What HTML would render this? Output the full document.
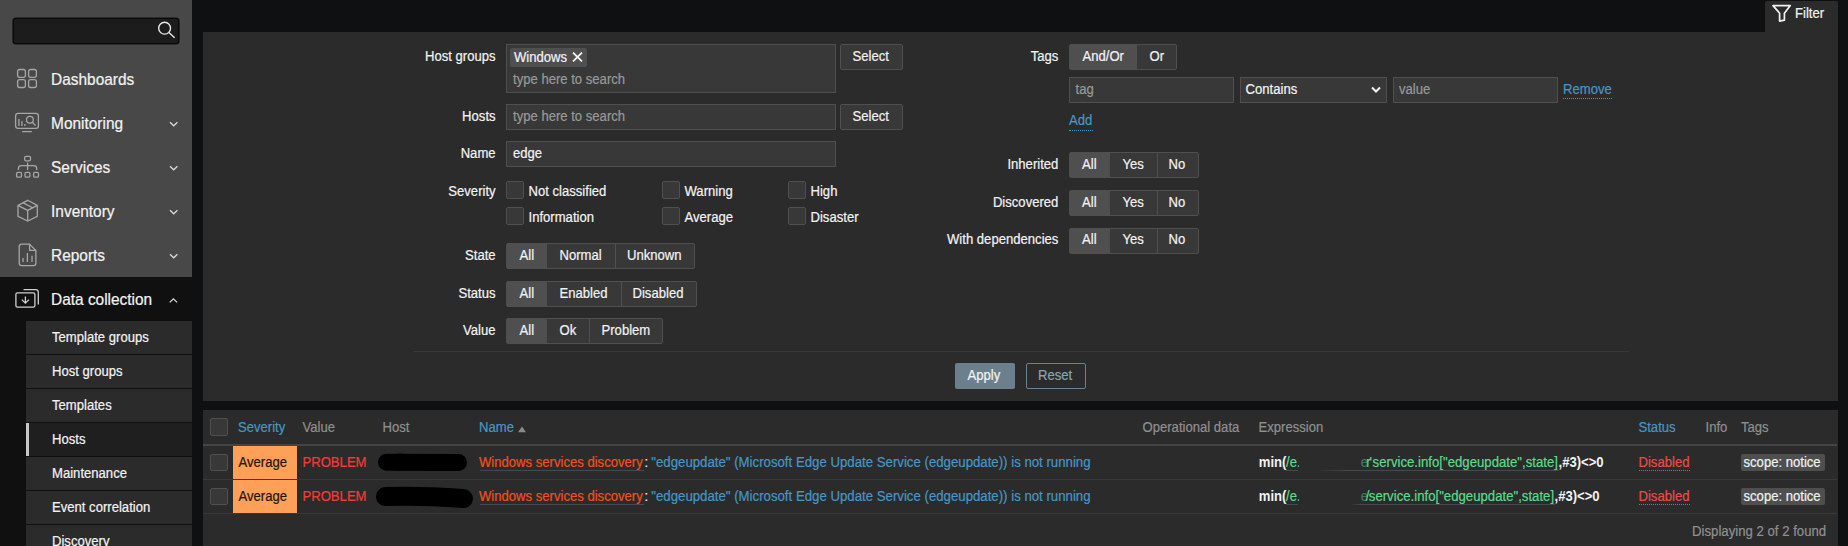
<!DOCTYPE html>
<html><head><meta charset="utf-8">
<style>
*{box-sizing:border-box;margin:0;padding:0}
html,body{width:1848px;height:546px;overflow:hidden;background:#0e1012;font-family:"Liberation Sans",sans-serif;color:#f2f2f2;font-size:13.1px;-webkit-text-stroke:0.2px currentColor}
.a{position:absolute}
.t{position:absolute;white-space:nowrap;line-height:16px;transform:scaleY(1.09);transform-origin:0 12px}
#sb{left:0;top:0;width:192px;height:277px;background:#484848}
#search{left:13px;top:18px;width:166px;height:26px;background:#1c1c1c;border:1px solid #0a0a0a;box-shadow:0 0 0 .6px #111;border-radius:3px}
.mi{font-size:15.42px;color:#f2f2f2;line-height:18px;transform:scaleY(1.05);transform-origin:0 14px}
.chev{position:absolute;left:170px;width:8px;height:5px}
#dc{left:0;top:277px;width:192px;height:269px;background:#101010}
.sub{position:absolute;left:26px;width:166px;height:33px;background:#2b2b2b}
.sub.sel{background:#1f1f1f}
.subt{position:absolute;left:52px;white-space:nowrap;line-height:16px;font-size:13.1px;transform:scaleY(1.09);transform-origin:0 12px}
#panel{left:203px;top:32px;width:1635px;height:369px;background:#2b2b2b}
#tab{left:1765px;top:1px;width:73px;height:31px;background:#2b2b2b;border-radius:2px 2px 0 0}
#tbl{left:203px;top:410px;width:1635px;height:136px;background:#2b2b2b}
.lbl{position:absolute;white-space:nowrap;line-height:16px;text-align:right;transform:scaleY(1.09);transform-origin:0 12px}
.inp{position:absolute;background:#383838;border:1px solid #4f4f4f}
.btn{position:absolute;background:#383838;border:1px solid #4f4f4f;border-radius:2px}
.ph{color:#999}
.cb{position:absolute;width:18px;height:18px;background:#383838;border:1px solid #4f4f4f;border-radius:2px}
.rg{position:absolute;border:1px solid #4f4f4f;border-radius:2px;background:#383838;height:26px}
.rs{position:absolute;top:0;height:24px;background:#4f4f4f}
.rsep{position:absolute;top:0;width:1px;height:24px;background:#4f4f4f}
.link{color:#4796c4}
.th{color:#8f8f8f}
.red{color:#f43a36}
.orange{color:#f24f1d}
.green{color:#59db8f}
.b{font-weight:bold;-webkit-text-stroke:0}
</style></head><body>
<!-- sidebar -->
<div id="sb" class="a"></div>
<div id="search" class="a"></div>
<div id="dc" class="a"></div>
<svg class="a" style="left:0;top:0" width="192" height="546" viewBox="0 0 192 546" fill="none">
 <g stroke="#e6e6e6" stroke-width="1.4"><circle cx="164.6" cy="28.2" r="5.9"/><path d="M168.9 32.6 L174.6 37.8"/></g>
 <g stroke="#a6a6a6" stroke-width="1.3">
  <rect x="17.6" y="69.5" width="7.8" height="7.8" rx="2"/><rect x="28.6" y="69.5" width="7.8" height="7.8" rx="2"/>
  <rect x="17.6" y="79.7" width="7.8" height="7.8" rx="2"/><rect x="28.6" y="79.7" width="7.8" height="7.8" rx="2"/>
  <rect x="15.6" y="113.4" width="22.8" height="14.9" rx="2.6"/><path d="M22.2 131.6 H31.8"/>
  <path d="M18.9 119 V126 M21.9 121.2 V126 M24.9 123.9 V126"/><circle cx="29.9" cy="119.8" r="3.4"/><path d="M32.3 122.3 L35.5 125.5"/>
  <rect x="24.7" y="156.3" width="5.8" height="4.6" rx="1.3"/><path d="M27.6 162.6 V169.9 M18.4 169.9 V168.5 Q18.4 165.7 21.4 165.7 H33.7 Q36.7 165.7 36.7 168.5 V169.9"/>
  <rect x="16.6" y="172.4" width="4.9" height="4.8" rx="1.3"/><rect x="25" y="172.4" width="4.9" height="4.8" rx="1.3"/><rect x="33.6" y="172.4" width="4.9" height="4.8" rx="1.3"/>
  <path d="M27.7 200.3 L37.3 205.4 V216.4 L27.7 221 L18 216.4 V205.4 Z M18 205.4 L27.7 210.4 L37.3 205.4 M27.7 210.4 V221 M22.8 202.6 L32.6 207.8"/>
  <path d="M29.6 244.2 H21.8 Q19.2 244.2 19.2 246.8 V263 Q19.2 265.6 21.8 265.6 H33.3 Q35.9 265.6 35.9 263 V250.4 L29.6 244.2 V250.4 H35.9"/>
  <path d="M23 258 V262 M27.4 253 V262 M32 255.8 V262"/>
 </g>
 <g stroke="#d0d0d0" stroke-width="1.3">
  <rect x="15.9" y="292.8" width="19" height="14.4" rx="1.6"/><path d="M23.5 289.6 H35.6 Q38.3 289.6 38.3 292.3 V304.6"/>
  <path d="M25.4 296.4 V303 M21.8 299.6 L25.4 303.2 L29 299.6"/>
 </g>
 <g stroke="#d8d8d8" stroke-width="1.3"><path d="M170 122.2 L173.7 125.8 L177.4 122.2 M170 166.2 L173.7 169.8 L177.4 166.2 M170 210.2 L173.7 213.8 L177.4 210.2 M170 254.2 L173.7 257.8 L177.4 254.2"/>
 <path d="M169.7 302.4 L173.4 298.8 L177.1 302.4"/></g>
</svg>
<div class="t mi" style="left:51.1px;top:70.5px">Dashboards</div>
<div class="t mi" style="left:51.1px;top:114.5px">Monitoring</div>
<div class="t mi" style="left:51.1px;top:158.5px">Services</div>
<div class="t mi" style="left:51.1px;top:202.5px">Inventory</div>
<div class="t mi" style="left:51.1px;top:246.5px">Reports</div>
<div class="t mi" style="left:51.1px;top:290.5px">Data collection</div>
<div class="sub" style="top:321px"></div><div class="subt" style="top:330px">Template groups</div>
<div class="sub" style="top:355px"></div><div class="subt" style="top:364px">Host groups</div>
<div class="sub" style="top:389px"></div><div class="subt" style="top:398px">Templates</div>
<div class="sub sel" style="top:423px"></div><div class="a" style="left:26px;top:423px;width:3px;height:33px;background:#c8c8c8"></div><div class="subt" style="top:432px">Hosts</div>
<div class="sub" style="top:457px"></div><div class="subt" style="top:466px">Maintenance</div>
<div class="sub" style="top:491px"></div><div class="subt" style="top:500px">Event correlation</div>
<div class="sub" style="top:525px"></div><div class="subt" style="top:534px">Discovery</div>

<!-- panel -->
<div id="tab" class="a"></div>
<div id="panel" class="a"></div>
<div id="tbl" class="a"></div>
<!-- filter tab -->
<svg class="a" style="left:1765px;top:0" width="40" height="32" viewBox="1765 0 40 32" fill="none"><path d="M1773 5.6 H1790.3 L1784.4 13.2 V20.2 L1779.6 21.2 V13.2 Z" stroke="#f2f2f2" stroke-width="1.7" stroke-linejoin="round"/></svg>
<div class="t" style="left:1795px;top:6px">Filter</div>
<!-- left labels -->
<div class="lbl" style="left:300px;width:195.6px;top:49px">Host groups</div>
<div class="lbl" style="left:300px;width:195.6px;top:109px">Hosts</div>
<div class="lbl" style="left:300px;width:195.6px;top:146px">Name</div>
<div class="lbl" style="left:300px;width:195.6px;top:184px">Severity</div>
<div class="lbl" style="left:300px;width:195.6px;top:248px">State</div>
<div class="lbl" style="left:300px;width:195.6px;top:286px">Status</div>
<div class="lbl" style="left:300px;width:195.6px;top:323px">Value</div>
<!-- host groups multiselect -->
<div class="inp" style="left:506px;top:44px;width:330px;height:49px"></div>
<div class="a" style="left:510px;top:48px;width:77px;height:19px;background:#4f4f4f;border-radius:2px"></div>
<div class="t" style="left:514px;top:50px">Windows</div>
<svg class="a" style="left:572px;top:52px" width="11" height="10" viewBox="0 0 11 10"><path d="M1 0.6 L10 9.4 M10 0.6 L1 9.4" stroke="#f2f2f2" stroke-width="1.8"/></svg>
<div class="t ph" style="left:513px;top:72px">type here to search</div>
<div class="btn" style="left:840px;top:44px;width:63px;height:26px"></div>
<div class="t" style="left:852.5px;top:49px">Select</div>
<div class="inp" style="left:506px;top:104px;width:330px;height:26px"></div>
<div class="t ph" style="left:513px;top:109px">type here to search</div>
<div class="btn" style="left:840px;top:104px;width:63px;height:26px"></div>
<div class="t" style="left:852.5px;top:109px">Select</div>
<div class="inp" style="left:506px;top:141px;width:330px;height:26px"></div>
<div class="t" style="left:513px;top:146px">edge</div>
<!-- severity -->
<div class="cb" style="left:506px;top:181px"></div><div class="t" style="left:528.5px;top:184px">Not classified</div>
<div class="cb" style="left:506px;top:207px"></div><div class="t" style="left:528.5px;top:210px">Information</div>
<div class="cb" style="left:662px;top:181px"></div><div class="t" style="left:684.5px;top:184px">Warning</div>
<div class="cb" style="left:662px;top:207px"></div><div class="t" style="left:684.5px;top:210px">Average</div>
<div class="cb" style="left:788px;top:181px"></div><div class="t" style="left:810.5px;top:184px">High</div>
<div class="cb" style="left:788px;top:207px"></div><div class="t" style="left:810.5px;top:210px">Disaster</div>
<!-- radios left -->
<div class="rg" style="left:506px;top:243px;width:189px"><div class="rs" style="left:0;width:40px"></div><div class="rsep" style="left:107.5px"></div></div>
<div class="t" style="left:519.5px;top:248px">All</div><div class="t" style="left:559.5px;top:248px">Normal</div><div class="t" style="left:627px;top:248px">Unknown</div>
<div class="rg" style="left:506px;top:281px;width:191px"><div class="rs" style="left:0;width:40px"></div><div class="rsep" style="left:114px"></div></div>
<div class="t" style="left:519.5px;top:286px">All</div><div class="t" style="left:559.5px;top:286px">Enabled</div><div class="t" style="left:632.5px;top:286px">Disabled</div>
<div class="rg" style="left:506px;top:318px;width:157px"><div class="rs" style="left:0;width:40px"></div><div class="rsep" style="left:82px"></div></div>
<div class="t" style="left:519.5px;top:323px">All</div><div class="t" style="left:559.5px;top:323px">Ok</div><div class="t" style="left:601.5px;top:323px">Problem</div>
<!-- right labels -->
<div class="lbl" style="left:850px;width:208.4px;top:49px">Tags</div>
<div class="lbl" style="left:850px;width:208.4px;top:157px">Inherited</div>
<div class="lbl" style="left:850px;width:208.4px;top:195px">Discovered</div>
<div class="lbl" style="left:850px;width:208.4px;top:232px">With dependencies</div>
<div class="rg" style="left:1069px;top:44px;width:108px"><div class="rs" style="left:0;width:67px"></div></div>
<div class="t" style="left:1082.5px;top:49px">And/Or</div><div class="t" style="left:1149.5px;top:49px">Or</div>
<div class="inp" style="left:1069px;top:77px;width:165px;height:26px"></div>
<div class="t ph" style="left:1075.5px;top:82px">tag</div>
<div class="inp" style="left:1240px;top:77px;width:147px;height:26px"></div>
<div class="t" style="left:1245.6px;top:82px">Contains</div>
<svg class="a" style="left:1370px;top:85px" width="12" height="10" viewBox="0 0 12 10"><path d="M2 2.5 L6 6.5 L10 2.5" stroke="#f2f2f2" stroke-width="2" fill="none"/></svg>
<div class="inp" style="left:1393px;top:77px;width:165px;height:26px"></div>
<div class="t ph" style="left:1399px;top:82px">value</div>
<div class="t link" style="left:1563px;top:82px">Remove</div>
<div class="a" style="left:1563px;top:97.5px;width:49px;border-top:1px dotted #4796c4"></div>
<div class="t link" style="left:1069px;top:113px">Add</div>
<div class="a" style="left:1069px;top:130px;width:24px;border-top:1px dotted #4796c4"></div>
<div class="rg" style="left:1069px;top:152px;width:130px"><div class="rs" style="left:0;width:40px"></div><div class="rsep" style="left:87px"></div></div>
<div class="t" style="left:1082px;top:157px">All</div><div class="t" style="left:1122.5px;top:157px">Yes</div><div class="t" style="left:1168.5px;top:157px">No</div>
<div class="rg" style="left:1069px;top:190px;width:130px"><div class="rs" style="left:0;width:40px"></div><div class="rsep" style="left:87px"></div></div>
<div class="t" style="left:1082px;top:195px">All</div><div class="t" style="left:1122.5px;top:195px">Yes</div><div class="t" style="left:1168.5px;top:195px">No</div>
<div class="rg" style="left:1069px;top:228px;width:130px"><div class="rs" style="left:0;width:40px"></div><div class="rsep" style="left:87px"></div></div>
<div class="t" style="left:1082px;top:232px">All</div><div class="t" style="left:1122.5px;top:232px">Yes</div><div class="t" style="left:1168.5px;top:232px">No</div>
<!-- separator & buttons -->
<div class="a" style="left:413px;top:351px;width:1216px;height:1px;background:#383838"></div>
<div class="a" style="left:955px;top:363px;width:60px;height:26px;background:#6b808c;border-radius:2px"></div>
<div class="t" style="left:967.5px;top:368px">Apply</div>
<div class="a" style="left:1026px;top:363px;width:60px;height:26px;border:1px solid #6b808c;border-radius:2px"></div>
<div class="t" style="left:1038px;top:368px;color:#8da3b0">Reset</div>
<!-- table -->
<div class="cb" style="left:210px;top:418px"></div>
<div class="t link" style="left:238px;top:420px">Severity</div>
<div class="t th" style="left:302.5px;top:420px">Value</div>
<div class="t th" style="left:382.5px;top:420px">Host</div>
<div class="t link" style="left:479px;top:420px">Name</div>
<svg class="a" style="left:517px;top:426px" width="10" height="7" viewBox="0 0 10 7"><path d="M1 6.2 L5 0.6 L9 6.2 Z" fill="#8a8a8a"/></svg>
<div class="t th" style="left:1142.5px;top:420px">Operational data</div>
<div class="t th" style="left:1258.5px;top:420px">Expression</div>
<div class="t link" style="left:1638.5px;top:420px">Status</div>
<div class="t th" style="left:1705.5px;top:420px">Info</div>
<div class="t th" style="left:1741px;top:420px">Tags</div>
<div class="a" style="left:203px;top:444px;width:1634px;height:2px;background:#444"></div>
<div class="a" style="left:203px;top:479px;width:1634px;height:1px;background:#383838"></div>
<div class="a" style="left:203px;top:513px;width:1634px;height:1px;background:#383838"></div>
<!-- row 1 -->
<div class="cb" style="left:210px;top:453.5px;height:17.5px"></div>
<div class="a" style="left:233px;top:446px;width:64px;height:33px;background:#ffa059"></div>
<div class="t" style="left:238.5px;top:455px;color:#1f1408">Average</div>
<div class="t red" style="left:302.5px;top:455px">PROBLEM</div>
<div class="t orange" style="left:479px;top:455px">Windows services discovery</div>
<div class="a" style="left:479.5px;top:470px;width:164.5px;height:1px;background:#434b51"></div>
<div class="t" style="left:644.5px;top:455px">:</div>
<div class="t link" style="left:651.3px;top:455px;font-size:13.23px">"edgeupdate" (Microsoft Edge Update Service (edgeupdate)) is not running</div>
<div class="t b" style="left:1258.8px;top:455px">min(</div>
<div class="t green" style="left:1286px;top:455px">/e.</div>
<div class="a" style="left:1298.5px;top:448px;width:61px;height:26px;background:#2b2b2b"></div>
<div class="t green" style="left:1360.8px;top:455px;opacity:.45">e</div><div class="t green" style="left:1366.2px;top:455px">r</div><div class="t green" style="left:1369.6px;top:455px">'</div><div class="t green" style="left:1372.6px;top:455px;font-size:13.2px">service.info["edgeupdate",state]</div>
<div class="a" style="left:1286px;top:470px;width:12px;height:1px;background:#434b51"></div>
<div class="a" style="left:1318px;top:470px;width:240.5px;height:1px;background:linear-gradient(90deg,#2b2b2b,#434b51 30px)"></div>
<div class="t b" style="left:1558.5px;top:455px">,#3)&lt;&gt;0</div>
<div class="t" style="left:1638.5px;top:455px;color:#ea4b4b">Disabled</div>
<div class="a" style="left:1639px;top:470px;width:51px;border-top:1px dotted #ea4b4b"></div>
<div class="a" style="left:1741px;top:454px;width:84px;height:17px;background:#4f4f4f;border-radius:2px"></div>
<div class="t" style="left:1743.5px;top:455px">scope: notice</div>
<!-- row 2 -->
<div class="cb" style="left:210px;top:487.5px;height:17.5px"></div>
<div class="a" style="left:233px;top:480px;width:64px;height:33px;background:#ffa059"></div>
<div class="t" style="left:238.5px;top:489px;color:#1f1408">Average</div>
<div class="t red" style="left:302.5px;top:489px">PROBLEM</div>
<div class="t orange" style="left:479px;top:489px">Windows services discovery</div>
<div class="a" style="left:479.5px;top:504px;width:164.5px;height:1px;background:#434b51"></div>
<div class="t" style="left:644.5px;top:489px">:</div>
<div class="t link" style="left:651.3px;top:489px;font-size:13.23px">"edgeupdate" (Microsoft Edge Update Service (edgeupdate)) is not running</div>
<div class="t b" style="left:1258.8px;top:489px">min(</div>
<div class="t green" style="left:1286px;top:489px">/e.</div>
<div class="a" style="left:1298.5px;top:482px;width:57px;height:26px;background:#2b2b2b"></div>
<div class="t green" style="left:1360.8px;top:489px;opacity:.45">e</div><div class="t green" style="left:1365.8px;top:489px">/</div><div class="t green" style="left:1368.8px;top:489px;font-size:13.2px">service.info["edgeupdate",state]</div>
<div class="a" style="left:1286px;top:504px;width:12px;height:1px;background:#434b51"></div>
<div class="a" style="left:1350px;top:504px;width:204.5px;height:1px;background:linear-gradient(90deg,#2b2b2b,#434b51 12px)"></div>
<div class="t b" style="left:1554.5px;top:489px">,#3)&lt;&gt;0</div>
<div class="t" style="left:1638.5px;top:489px;color:#ea4b4b">Disabled</div>
<div class="a" style="left:1639px;top:504px;width:51px;border-top:1px dotted #ea4b4b"></div>
<div class="a" style="left:1741px;top:488px;width:84px;height:17px;background:#4f4f4f;border-radius:2px"></div>
<div class="t" style="left:1743.5px;top:489px">scope: notice</div>
<!-- redaction blobs -->
<svg class="a" style="left:360px;top:440px" width="130" height="80" viewBox="360 440 130 80">
<path d="M386.5 462.3 L458.5 462.5" stroke="#000" stroke-width="17" stroke-linecap="round" fill="none"/><ellipse cx="400" cy="462" rx="14" ry="8.6" fill="#000"/>
<path d="M385.5 496.6 Q420 495.5 463.5 498.6" stroke="#000" stroke-width="19" stroke-linecap="round" fill="none"/>
</svg>
<div class="t th" style="left:1692px;top:524px;font-size:13.2px">Displaying 2 of 2 found</div>
</body></html>
